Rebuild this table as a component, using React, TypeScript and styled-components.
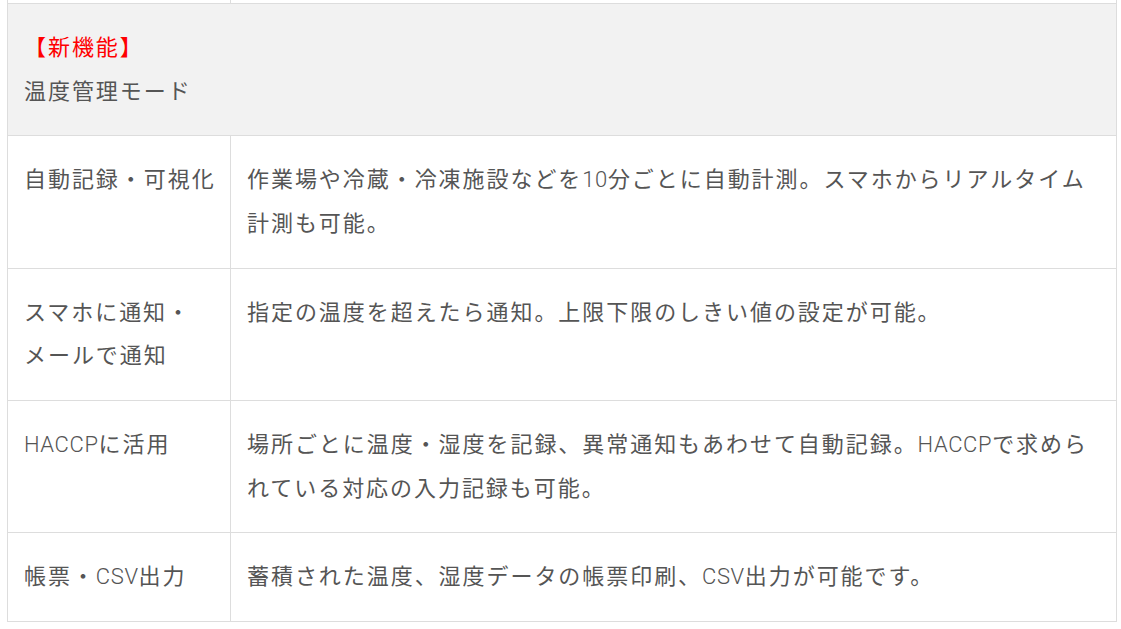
import React from "react";
import styled, { createGlobalStyle } from "styled-components";

const GlobalStyle = createGlobalStyle`
  html, body {
    margin: 0;
    padding: 0;
    background: #ffffff;
  }
  body {
    font-family: "Roboto", "Noto Sans CJK JP", sans-serif;
  }
`;

// latin runs are set lighter than the japanese text
const withLatin = (s: string) =>
  s.split(/([A-Za-z0-9]+)/).map((part, i) =>
    /^[A-Za-z0-9]+$/.test(part) ? <Latin key={i}>{part}</Latin> : part
  );

const rows = [
  {
    label: "自動記録・可視化",
    text: "作業場や冷蔵・冷凍施設などを10分ごとに自動計測。スマホからリアルタイム計測も可能。",
  },
  {
    label: "スマホに通知・\nメールで通知",
    text: "指定の温度を超えたら通知。上限下限のしきい値の設定が可能。",
  },
  {
    label: "HACCPに活用",
    text: "場所ごとに温度・湿度を記録、異常通知もあわせて自動記録。HACCPで求められている対応の入力記録も可能。",
  },
  {
    label: "帳票・CSV出力",
    text: "蓄積された温度、湿度データの帳票印刷、CSV出力が可能です。",
  },
];

const App: React.FC = () => {
  return (
    <Page>
      <GlobalStyle />
      <Table>
        <colgroup>
          <Col $width={223} />
          <Col />
        </colgroup>
        <tbody>
          <PrevRow>
            <PrevCell />
            <PrevCell />
          </PrevRow>
          <tr>
            <HeadCell colSpan={2}>
              <New>【新機能】</New>
              <br />
              温度管理モード
            </HeadCell>
          </tr>
          {rows.map((r, i) => (
            <tr key={i}>
              <LabelCell>{withLatin(r.label)}</LabelCell>
              <Cell>{withLatin(r.text)}</Cell>
            </tr>
          ))}
        </tbody>
      </Table>
    </Page>
  );
};

export default App;

const Page = styled.div`
  padding: 0 4px 0 7px;
`;

const Table = styled.table`
  width: 1110px;
  table-layout: fixed;
  border-collapse: separate;
  border-spacing: 0;
  border-right: 1px solid #dddddd;
  border-bottom: 1px solid #dddddd;
  color: #555555;
  font-size: 22px;
  line-height: 43.67px;
  letter-spacing: 1.95px;
`;

const Col = styled.col<{ $width?: number }>`
  width: ${(p) => (p.$width ? `${p.$width}px` : "auto")};
`;

const PrevRow = styled.tr`
  height: 3px;
`;

const PrevCell = styled.td`
  height: 3px;
  padding: 0;
  border-left: 1px solid #dddddd;
`;

const Cell = styled.td`
  box-sizing: border-box;
  padding: 22px 16px;
  vertical-align: top;
  text-align: left;
  border-left: 1px solid #dddddd;
  border-top: 1px solid #dddddd;
`;

const LabelCell = styled(Cell)`
  padding-right: 12px;
  white-space: pre-line;
`;

const HeadCell = styled(Cell)`
  background-color: #f2f2f2;
`;

const New = styled.span`
  color: #ff0000;
`;

const Latin = styled.span`
  font-weight: 300;
  letter-spacing: 0.6px;
`;
